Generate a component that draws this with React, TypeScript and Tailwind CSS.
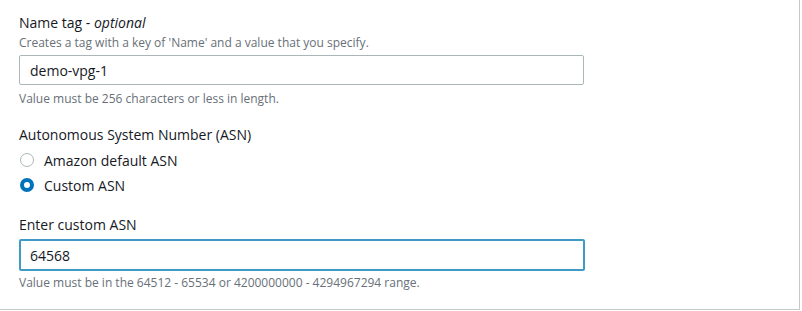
import React from "react";

export default function App() {
  return (
    <div
      className="w-[802px] h-[311px] bg-white overflow-hidden"
      style={{ fontFamily: '"Open Sans", "Liberation Sans", Arial, sans-serif' }}
    >
      <div className="w-[800px] h-[310px] border-r border-b border-[#c5cbcb] pl-[19px] pt-[13px] text-[#16191f]">
        <div className="text-[14px] leading-[20px]">
          Name tag - <i>optional</i>
        </div>
        <div className="text-[12px] leading-[18px] text-[#687078] mt-[1px]">
          Creates a tag with a key of 'Name' and a value that you specify.
        </div>
        <div className="w-[565px] h-[30px] border border-[#aab7b8] rounded-[2px] mt-[3px] flex items-center px-[10px] text-[14px]">
          demo-vpg-1
        </div>
        <div className="text-[12px] leading-[18px] text-[#687078] mt-[5px]">
          Value must be 256 characters or less in length.
        </div>

        <div className="text-[14px] leading-[20px] mt-[17px]">Autonomous System Number (ASN)</div>
        <div className="flex items-center gap-[10px] mt-[5px] h-[20px]">
          <span className="w-[14px] h-[14px] rounded-full border border-[#aab7b8] ml-[1px]" />
          <span className="text-[14px]">Amazon default ASN</span>
        </div>
        <div className="flex items-center gap-[10px] mt-[5px] h-[20px]">
          <span className="w-[14px] h-[14px] rounded-full border-[4px] border-[#0073bb] ml-[1px]" />
          <span className="text-[14px]">Custom ASN</span>
        </div>

        <div className="text-[14px] leading-[20px] mt-[20px]">Enter custom ASN</div>
        <div className="w-[566px] h-[32px] border-2 border-[#3f9bc5] rounded-[2px] mt-[4px] flex items-center px-[9px] text-[14px]">
          64568
        </div>
        <div className="text-[12px] leading-[18px] text-[#687078] mt-[3px]">
          Value must be in the 64512 - 65534 or 4200000000 - 4294967294 range.
        </div>
      </div>
    </div>
  );
}
